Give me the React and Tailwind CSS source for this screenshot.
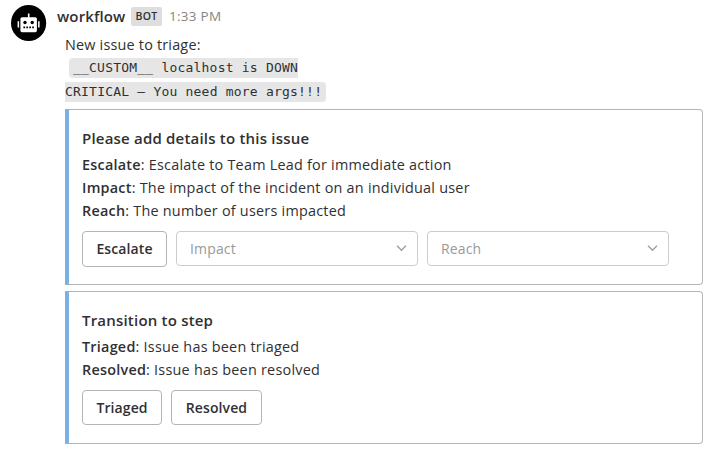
import React from 'react';

function Card({ title, rows, className, children }) {
  return (
    <section className={`box-border flex w-[638px] rounded-r-[4px] border border-l-0 border-[#b5b5b5] ${className}`}>
      <div className="-my-px w-[4px] shrink-0 border-y border-[#94b3cf] bg-[#78b1e4]" />
      <div className="pl-[13px] pt-[17px]">
        <h2 className="h-[26px] whitespace-nowrap text-[15px] font-semibold leading-[23px] tracking-[0.2px]">{title}</h2>
        {rows.map(([label, text]) => (
          <p key={label} className="h-[23px] whitespace-nowrap text-[14.4px] leading-[23px] tracking-[0.235px]">
            <span className="font-semibold">{label}</span>: {text}
          </p>
        ))}
        <div className="mt-[9px] flex">{children}</div>
      </div>
    </section>
  );
}

function Button({ label, className }) {
  return (
    <button className={`rounded-[4px] border border-[#b4b4b4] pb-px text-[14px] font-semibold tracking-[0.1px] ${className}`}>{label}</button>
  );
}

function Select({ label }) {
  return (
    <div className="ml-[9px] flex h-[35px] w-[242px] items-center justify-between rounded-[4px] border border-[#cccccc] pl-[13px] pr-[10px] text-[14px] text-[#999999]">
      <span className="tracking-[0.15px]">{label}</span>
      <svg className="mb-[2px]" width="11" height="8" viewBox="0 0 11 8" fill="none" stroke="#a0a0a0" strokeWidth="1.4"><path d="M1 1.7 5.5 6.2 10 1.7" /></svg>
    </div>
  );
}

export default function App() {
  return (
    <main className="flex h-[453px] w-[714px] overflow-hidden bg-white pl-[11px] font-['Open_Sans',sans-serif] text-[#303033]">
      <svg className="mt-[5px] shrink-0" width="36" height="36" viewBox="0 0 36 36">
        <ellipse cx="17.6" cy="18" rx="17.6" ry="18" fill="#000" />
        <path fill="#fff" d="M16.9 8.5h1.6v3.7h5.8a1.6 1.6 0 0 1 1.6 1.6v11.8a1.6 1.6 0 0 1-1.6 1.6H11a1.6 1.6 0 0 1-1.6-1.6V13.8a1.6 1.6 0 0 1 1.6-1.6h5.9zM6.6 16.3h1.5v6.2H6.6zM27.1 16.3h1.5v6.2h-1.5z" />
        <circle cx="14" cy="17.5" r="1.7" fill="#000" />
        <circle cx="21.2" cy="17.5" r="1.7" fill="#000" />
        <path fill="#000" d="M12.4 21.6h1.7v1.7h-1.7zM15.3 21.6H17v1.7h-1.7zM18.3 21.6H20v1.7h-1.7zM21.2 21.6h1.7v1.7h-1.7z" />
      </svg>
      <div className="ml-[10px]">
        <header className="flex h-[33px] items-center">
          <span className="w-[69px] text-[15px] font-semibold tracking-[0.12px]">workflow</span>
          <span className="ml-[5px] flex h-[19px] w-[31px] items-center justify-center rounded-[2px] bg-[#dedede] text-[10.5px] font-semibold tracking-[0.3px]">BOT</span>
          <span className="ml-[7px] text-[13.5px] tracking-[0.28px] text-[#858585]">1:33 PM</span>
        </header>
        <div className="ml-[8px]">
          <p className="h-[23px] text-[14.4px] leading-[23px] tracking-[0.2px]">New issue to triage:</p>
          <div className="flex h-[53px] flex-col items-start whitespace-pre font-['DejaVu_Sans_Mono',monospace] text-[13px] tracking-[0.21px]">
            <span className="ml-[4px] mt-[2px] h-[20px] rounded-l-[4px] bg-[#e6e6e6] pl-[4px] leading-[20px]">__CUSTOM__ localhost is DOWN</span>
            <span className="mt-[4px] h-[20px] rounded-r-[4px] bg-[#e6e6e6] pr-[4px] leading-[20px]">CRITICAL – You need more args!!!</span>
          </div>
          <Card title="Please add details to this issue" className="h-[176px]" rows={[['Escalate', 'Escalate to Team Lead for immediate action'], ['Impact', 'The impact of the incident on an individual user'], ['Reach', 'The number of users impacted']]}>
            <Button label="Escalate" className="h-[36px] w-[85px]" />
            <Select label="Impact" />
            <Select label="Reach" />
          </Card>
          <Card title="Transition to step" className="mt-[6px] h-[153px]" rows={[['Triaged', 'Issue has been triaged'], ['Resolved', 'Issue has been resolved']]}>
            <Button label="Triaged" className="h-[35px] w-[80px]" />
            <Button label="Resolved" className="ml-[9px] h-[35px] w-[91px]" />
          </Card>
        </div>
      </div>
    </main>
  );
}
